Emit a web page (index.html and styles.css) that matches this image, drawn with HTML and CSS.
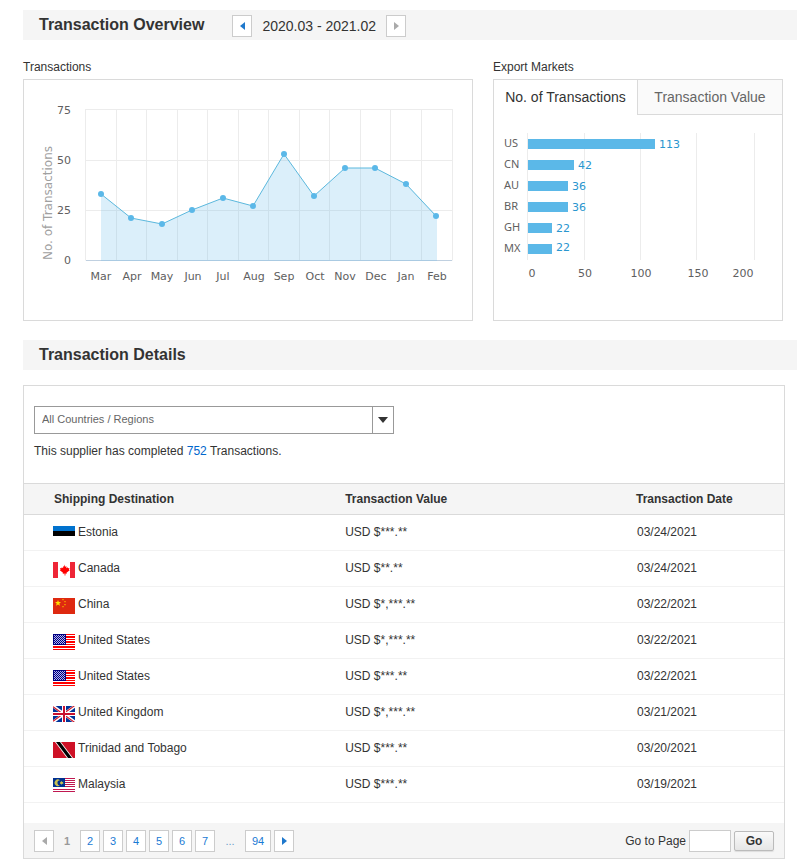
FILE: index.html
```html
<!DOCTYPE html>
<html lang="en">
<head>
<meta charset="utf-8">
<title>Transaction Overview</title>
<meta name="viewport" content="width=device-width, initial-scale=1">
<link rel="stylesheet" href="styles.css">
</head>
<body>
<svg class="sprite" aria-hidden="true">
  <symbol id="flag-ee" viewBox="0 0 22 16"><path fill="#0072ce" d="M0 0h22v5H0z"/><path d="M0 5h22v5H0z"/></symbol>
  <symbol id="flag-ca" viewBox="0 0 22 16"><path fill="#fff" d="M0 0h22v16H0z"/><path fill="#ee2536" d="M0 0h5v16H0zM17 0h5v16h-5z"/><path fill="#f00" d="M11 2.500l1.300 2.200 1.200-.5-.2 2 1.400-.9.300.9 1.500-.2-.6 1.500.8.700-3.200 2.500.3 1.100-1.400-.2V13.500h-.8v-1.900l-1.900.2.3-1.100-3.200-2.500.8-.7-.6-1.500 1.500.2.300-.9 1.400.9-.2-2 1.200.5z"/></symbol>
  <symbol id="flag-cn" viewBox="0 0 22 16"><path fill="#de2910" d="M0 0h22v16H0z"/><path fill="#ffde00" d="M5 2l.8 2.100H8L6.300 5.500l.7 2.300-2-1.400-2 1.400.7-2.300L2 4.100h2.200z"/><path fill="#f08000" d="M9 1h2v1.300H9zM11 3h2v1.300h-2zM11 6h2v1.300h-2zM9 8h2v1.300H9z"/></symbol>
  <symbol id="flag-us" viewBox="0 0 22 16"><path fill="#fff" d="M0 0h22v16H0z"/><path fill="#f00" d="M0 0h22v1H0zM0 2h22v2H0zM0 5h22v1H0zM0 7h22v2H0zM0 10h22v1H0zM0 12h22v2H0zM0 15h22v1H0z"/><path fill="#000080" d="M0 0h13v11H0z"/><path stroke="#b4b4f0" stroke-dasharray="1 1" d="M1 1.500h11M2 2.500h10M1 3.500h11M2 4.500h10M1 5.500h11M2 6.500h10M1 7.500h11M2 8.500h10M1 9.500h11"/></symbol>
  <symbol id="flag-gb" viewBox="0 0 22 16"><path fill="#039" d="M0 0h22v16H0z"/><path stroke="#fff" stroke-width="3" d="M0 0l22 16M22 0L0 16"/><path stroke="#d01828" stroke-width="1.100" d="M0 .7l22 16M22-.7L0 15.300"/><path fill="#fff" d="M9 0h4v16H9zM0 6h22v4H0z"/><path fill="#c8102e" d="M10 0h2v16h-2zM0 7h22v2H0z"/></symbol>
  <symbol id="flag-tt" viewBox="0 0 22 16"><path fill="#ce1126" d="M0 0h22v16H0z"/><path fill="#fff" d="M2 0h6l12 16h-6z"/><path d="M3 0h4l12 16h-4z"/></symbol>
  <symbol id="flag-my" viewBox="0 0 22 16"><path fill="#fff" d="M0 0h22v14H0z"/><path fill="#c01850" d="M0 0h22v1H0zM0 2h22v1H0zM0 4h22v1H0zM0 6h22v1H0zM0 8h22v1H0zM0 11h22v1H0zM0 13h22v1H0z"/><path fill="#003090" d="M0 0h12v9H0z"/><path fill="#c8c050" d="M7 2.200A3.300 3.300 0 1 0 7 7.300A2.500 2.500 0 1 1 7 2.200zM8.500 2.700l.6 1.200 1.400-.2-.6 1.100.6 1.200-1.400-.3-.6 1.300-.6-1.300-1 .300.400-1.200-.4-1.100 1 .200z"/></symbol>
  <symbol id="tri-left" viewBox="0 0 5 8"><path d="M5 0v8L0 4z"/></symbol>
  <symbol id="tri-right" viewBox="0 0 5 8"><path d="M0 0v8l5-4z"/></symbol>
</svg>

<header class="bar">
  <h1>Transaction Overview</h1>
  <div class="period">
    <button class="box" type="button" aria-label="Previous period"><svg><use href="#tri-left"/></svg></button>
    <span class="period-text">2020.03 - 2021.02</span>
    <button class="box" type="button" aria-label="Next period" disabled><svg><use href="#tri-right"/></svg></button>
  </div>
</header>

<div class="charts">
  <section>
    <h2 class="chart-title">Transactions</h2>
    <div class="panel">
      <svg class="chart" viewBox="0 0 448 240" role="img" aria-label="Transactions per month">
        <path class="grid" d="M61.500 29.500v151M92.500 29.500v151M122.500 29.500v151M153.500 29.500v151M183.500 29.500v151M214.500 29.500v151M244.500 29.500v151M275.500 29.500v151M305.500 29.500v151M336.500 29.500v151M366.500 29.500v151M397.500 29.500v151M428.500 29.500v151M61 29.500h368M61 80.500h368M61 130.500h368"/>
        <path class="base" d="M62 180.500h366"/>
        <path class="area" d="M77 181V114L107 138L138 144L168 130L199 118L229 126L260 74L290 116L321 88L351 88L382 104L413 136V181z"/>
        <path class="line" d="M77 114L107 138L138 144L168 130L199 118L229 126L260 74L290 116L321 88L351 88L382 104L412 136"/>
        <g class="dots">
          <circle cx="77" cy="114" r="3"/><circle cx="107" cy="138" r="3"/><circle cx="138" cy="144" r="3"/><circle cx="168" cy="130" r="3"/><circle cx="199" cy="118" r="3"/><circle cx="229" cy="126" r="3"/><circle cx="260" cy="74" r="3"/><circle cx="290" cy="116" r="3"/><circle cx="321" cy="88" r="3"/><circle cx="351" cy="88" r="3"/><circle cx="382" cy="104" r="3"/><circle cx="412" cy="136" r="3"/>
        </g>
        <g class="end">
          <text x="47" y="34">75</text><text x="47" y="84">50</text><text x="47" y="134">25</text><text x="47" y="184">0</text>
        </g>
        <g class="mid">
          <text x="77" y="200">Mar</text><text x="108" y="200">Apr</text><text x="138" y="200">May</text><text x="169" y="200">Jun</text><text x="199" y="200">Jul</text><text x="230" y="200">Aug</text><text x="260" y="200">Sep</text><text x="291" y="200">Oct</text><text x="321" y="200">Nov</text><text x="352" y="200">Dec</text><text x="382" y="200">Jan</text><text x="413" y="200">Feb</text>
        </g>
        <text class="axis-title" transform="translate(28 123) rotate(-90)">No. of Transactions</text>
      </svg>
    </div>
  </section>

  <section>
    <h2 class="chart-title">Export Markets</h2>
    <div class="panel">
      <div class="tabs" role="tablist">
        <button class="tab active" type="button" role="tab" aria-selected="true">No. of Transactions</button>
        <button class="tab" type="button" role="tab" aria-selected="false">Transaction Value</button>
      </div>
      <svg class="chart" viewBox="0 0 288 205" role="img" aria-label="Transactions per export market">
        <path class="grid" d="M33.500 18v127M90.500 18v127M146.500 18v127M202.500 18v127M260.500 18v127"/>
        <path class="bars" d="M34 24h127v10H34zM34 45h46v10H34zM34 66h40v10H34zM34 87h40v10H34zM34 108h24v10H34zM34 129h24v10H34z"/>
        <g class="names">
          <text x="10" y="32">US</text><text x="10" y="53">CN</text><text x="10" y="74">AU</text><text x="10" y="95">BR</text><text x="10" y="116">GH</text><text x="10" y="137">MX</text>
        </g>
        <g class="values">
          <text x="165" y="33">113</text><text x="84" y="54">42</text><text x="78" y="75">36</text><text x="78" y="96">36</text><text x="62" y="117">22</text><text x="62" y="136">22</text>
        </g>
        <g class="mid">
          <text x="38" y="162">0</text><text x="91" y="162">50</text><text x="147" y="162">100</text><text x="204" y="162">150</text><text x="249" y="162">200</text>
        </g>
      </svg>
    </div>
  </section>
</div>

<div class="bar">
  <h2>Transaction Details</h2>
</div>

<section class="panel details">
  <div class="filter">
    <div class="select">
      <select aria-label="Country or region"><option>All Countries / Regions</option></select>
      <span class="arrow"><svg viewBox="0 0 10 6"><path d="M0 0h10L5 6z"/></svg></span>
    </div>
    <p>This supplier has completed <a href="#list">752</a> Transactions.</p>
  </div>

  <table id="list">
    <thead>
      <tr><th class="dest">Shipping Destination</th><th class="value">Transaction Value</th><th class="date">Transaction Date</th></tr>
    </thead>
    <tbody>
      <tr><td><div class="country"><svg><use href="#flag-ee"/></svg>Estonia</div></td><td>USD $***.**</td><td>03/24/2021</td></tr>
      <tr><td><div class="country"><svg><use href="#flag-ca"/></svg>Canada</div></td><td>USD $**.**</td><td>03/24/2021</td></tr>
      <tr><td><div class="country"><svg><use href="#flag-cn"/></svg>China</div></td><td>USD $*,***.**</td><td>03/22/2021</td></tr>
      <tr><td><div class="country"><svg><use href="#flag-us"/></svg>United States</div></td><td>USD $*,***.**</td><td>03/22/2021</td></tr>
      <tr><td><div class="country"><svg><use href="#flag-us"/></svg>United States</div></td><td>USD $***.**</td><td>03/22/2021</td></tr>
      <tr><td><div class="country"><svg><use href="#flag-gb"/></svg>United Kingdom</div></td><td>USD $*,***.**</td><td>03/21/2021</td></tr>
      <tr><td><div class="country"><svg><use href="#flag-tt"/></svg>Trinidad and Tobago</div></td><td>USD $***.**</td><td>03/20/2021</td></tr>
      <tr><td><div class="country"><svg><use href="#flag-my"/></svg>Malaysia</div></td><td>USD $***.**</td><td>03/19/2021</td></tr>
    </tbody>
  </table>

  <footer>
    <nav class="pages" aria-label="Pages">
      <button class="box" type="button" aria-label="Previous page" disabled><svg><use href="#tri-left"/></svg></button>
      <span class="current">1</span>
      <a class="box" href="#2">2</a>
      <a class="box" href="#3">3</a>
      <a class="box" href="#4">4</a>
      <a class="box" href="#5">5</a>
      <a class="box" href="#6">6</a>
      <a class="box" href="#7">7</a>
      <span class="more">...</span>
      <a class="box wide" href="#94">94</a>
      <button class="box" type="button" aria-label="Next page"><svg><use href="#tri-right"/></svg></button>
    </nav>
    <form class="goto">
      <label for="page">Go to Page</label>
      <input id="page" type="text">
      <button type="button">Go</button>
    </form>
  </footer>
</section>
</body>
</html>
```
FILE: styles.css
```css
* { box-sizing: border-box; }

body {
  margin: 0;
  padding: 10px 0 7px 23px;
  background: #fff;
  color: #333;
  font: 12px/18px "Liberation Sans", Arial, sans-serif;
}

h1, h2, p { margin: 0; font-weight: normal; }
a { color: #06c; text-decoration: none; }
button, input, select { font: inherit; color: inherit; }

.sprite { position: absolute; width: 0; height: 0; }

.bar {
  display: flex;
  height: 30px;
  padding-left: 16px;
  background: #f5f5f5;
}
.bar h1, .bar h2 {
  font-size: 16px;
  font-weight: bold;
  line-height: 30px;
}
.period {
  display: flex;
  align-items: center;
  gap: 10px;
  margin-left: 28px;
  padding-top: 2px;
}
.period-text { font-size: 14px; }

.box {
  display: flex;
  align-items: center;
  justify-content: center;
  width: 20px;
  height: 22px;
  padding: 0;
  border: 1px solid #ccc;
  background: #fff;
  color: #1a7ad4;
  font-size: 11px;
}
.box svg { width: 5px; height: 8px; fill: #1f78cc; }
.box:disabled svg { fill: #aaa; }
.box.wide { width: 26px; }

.charts {
  display: grid;
  grid-template-columns: 450fr 290fr;
  gap: 20px;
  margin: 18px 14px 19px 0;
}
.chart-title { margin-bottom: 3px; font-size: 12px; }
.panel { border: 1px solid #dadada; }

.tabs { display: grid; grid-template-columns: 143fr 145fr; height: 35px; }
.tab {
  padding: 0;
  border: solid #dadada;
  border-width: 0 0 1px 1px;
  background: #fafafa;
  color: #666;
  font-size: 14px;
}
.tab.active { border-color: #fff; border-left: 0; background: #fff; color: #333; }

.chart {
  display: block;
  width: 100%;
  font: 11px "DejaVu Sans", Verdana, sans-serif;
  fill: #606060;
}
.grid { fill: none; stroke: #ececec; }
.base { stroke: #c0d0e0; }
.area { fill: #5bb8e8; fill-opacity: .22; }
.line { fill: none; stroke: #5bb8dd; }
.dots { fill: #5bb8e8; }
.bars { fill: #5bb8e8; }
.end { text-anchor: end; }
.mid { text-anchor: middle; }
.names { font-family: "Noto Sans", sans-serif; }
.values { fill: #2a96cf; }
.axis-title { font-size: 12px; fill: #a0a0a0; text-anchor: middle; }

.details { margin: 15px 12px 0 0; }
.filter { padding: 20px 10px 23px; }
.select {
  display: flex;
  position: relative;
  max-width: 360px;
  height: 28px;
  margin-bottom: 8px;
}
.select select {
  appearance: none;
  width: 100%;
  padding: 0 30px 2px 7px;
  border: 1px solid #999;
  border-radius: 0;
  background: #fff;
  color: #666;
  font-size: 11px;
}
.arrow {
  display: flex;
  align-items: center;
  justify-content: center;
  position: absolute;
  inset: 0 0 0 auto;
  width: 22px;
  border: solid #999;
  border-width: 0 1px;
  pointer-events: none;
}
.arrow svg { width: 10px; height: 6px; fill: #333; }

table { width: 100%; border-spacing: 0; table-layout: fixed; }
th {
  height: 32px;
  padding: 0 0 0 2px;
  border: solid #dadada;
  border-width: 1px 0;
  background: #f5f5f5;
  text-align: left;
}
.dest { width: 42%; padding-left: 30px; }
.value { width: 38%; }
.date { padding-left: 4px; }
td {
  height: 36px;
  padding: 8px 0 0 2px;
  border-bottom: 1px solid #f2f2f2;
  vertical-align: top;
}
td:first-child { padding-left: 29px; }
td:last-child { padding-left: 5px; }
.country { display: flex; gap: 3px; }
.country svg { width: 22px; height: 16px; margin-top: 3px; }

footer {
  display: flex;
  align-items: center;
  justify-content: space-between;
  height: 35px;
  margin-top: 20px;
  padding: 0 10px;
  background: #f5f5f5;
}
.pages { display: flex; align-items: center; gap: 3px; font-size: 11px; }
.current { width: 20px; color: #999; font-weight: bold; text-align: center; }
.more { width: 24px; color: #6a9cc8; text-align: center; }
.goto { display: flex; align-items: center; gap: 3px; }
.goto input {
  width: 42px;
  height: 22px;
  padding: 0 4px;
  border: 1px solid #ccc;
  background: #fff;
}
.goto button {
  width: 40px;
  height: 20px;
  padding: 0;
  border: 1px solid #bbb;
  border-radius: 2px;
  background: linear-gradient(#fafafa, #e6e6e6);
  box-shadow: 0 1px 1px #ddd;
  font-weight: bold;
}
```
